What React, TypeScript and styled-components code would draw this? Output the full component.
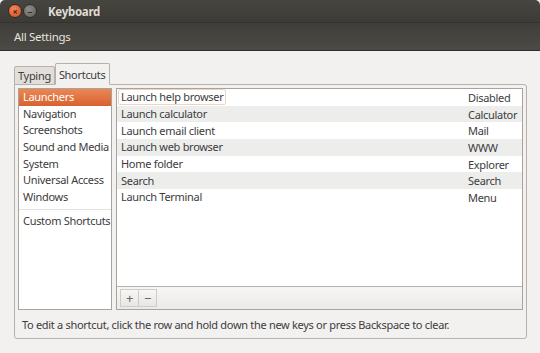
import styled, { createGlobalStyle } from 'styled-components';

const GlobalStyle = createGlobalStyle`
    html, body {
        margin: 0;
        padding: 0;
        background: #f2f1f0;
    }
    body {
        font-family: "Noto Sans", "DejaVu Sans", sans-serif;
        font-size: 11px;
        letter-spacing: -0.3px;
        color: #3c3c3c;
    }
`;

const Window = styled.div`
    width: 540px;
    height: 353px;
    overflow: hidden;
    display: flex;
    flex-direction: column;
    background: #f2f1f0;
`;

const TitleBar = styled.div`
    height: 22px;
    display: flex;
    align-items: center;
    padding-left: 8px;
    background: linear-gradient(#46453f, #3c3b37);
    border-bottom: 1px solid #33322e;
    border-radius: 5px 5px 0 0;
`;

const WinButton = styled.div<{ kind: 'close' | 'min' }>`
    width: 12px;
    height: 12px;
    border-radius: 50%;
    margin-right: 1px;
    background: ${p => p.kind === 'close'
        ? 'radial-gradient(circle at 40% 35%, #f58a5c, #d5471d)'
        : 'radial-gradient(circle at 40% 35%, #8f8d88, #5f5d58)'};
    border: 1px solid #2e2d2a;
    display: flex;
    align-items: center;
    justify-content: center;
    color: #3a2418;
    font-size: 9px;
    line-height: 1;
    font-weight: bold;
    letter-spacing: 0;
`;

const Title = styled.span`
    margin-left: 10px;
    color: #dfdbd2;
    font-weight: bold;
    font-size: 11.5px;
`;

const Toolbar = styled.div`
    height: 27px;
    display: flex;
    align-items: center;
    padding-left: 14px;
    background: linear-gradient(#3f3e3a, #4b4a45);
    border-bottom: 1px solid #2f2e2b;
`;

const ToolbarLabel = styled.span`
    color: #e6e3dd;
    font-size: 11.5px;
`;

const Body = styled.div`
    flex: 1;
    display: flex;
    flex-direction: column;
    padding: 14px 13px 0 14px;
`;

const TabRow = styled.div`
    display: flex;
    align-items: flex-end;
    height: 20px;
    margin-bottom: -1px;
    position: relative;
    z-index: 1;
`;

const Tab = styled.div<{ active?: boolean }>`
    height: ${p => (p.active ? 20 : 17)}px;
    padding: 0 3px;
    display: flex;
    align-items: center;
    font-size: 11px;
    color: #3c3c3c;
    border: 1px solid #b5b1ab;
    border-bottom: ${p => (p.active ? '1px solid #f2f1f0' : '1px solid #b5b1ab')};
    border-radius: 2px 2px 0 0;
    background: ${p => (p.active ? '#f2f1f0' : '#e2dfdb')};
`;

const Panel = styled.div`
    border: 1px solid #b5b1ab;
    border-radius: 0 3px 3px 3px;
    padding: 3px 3px 0 3px;
    display: flex;
    flex-direction: column;
    height: 255px;
    box-sizing: border-box;
`;

const Content = styled.div`
    display: flex;
    gap: 4px;
    height: 222px;
`;

const CategoryList = styled.div`
    width: 94px;
    background: #fff;
    border: 1px solid #a7a39d;
    box-sizing: border-box;
    display: flex;
    flex-direction: column;
`;

const Category = styled.div<{ selected?: boolean }>`
    height: 16.7px;
    line-height: 16.7px;
    padding-left: 4px;
    font-size: 11px;
    white-space: nowrap;
    color: ${p => (p.selected ? '#fff' : '#3c3c3c')};
    background: ${p => (p.selected ? 'linear-gradient(#ea8856, #d8612e)' : 'transparent')};
`;

const Separator = styled.div`
    height: 1px;
    margin: 3px 0 3px;
    background: #e4e2df;
`;

const RightPane = styled.div`
    flex: 1;
    display: flex;
    flex-direction: column;
    border: 1px solid #a7a39d;
    box-sizing: border-box;
`;

const ShortcutList = styled.div`
    flex: 1;
    background: #fff;
    border-bottom: 1px solid #b5b1ab;
`;

const ShortcutRow = styled.div<{ odd: boolean }>`
    height: 16.7px;
    display: flex;
    align-items: center;
    justify-content: space-between;
    padding: 0 4px 0 1px;
    font-size: 11px;
    background: ${p => (p.odd ? '#ededec' : '#fff')};
`;

const ActionName = styled.span<{ focused?: boolean }>`
    padding: 0 2px;
    border: 1px solid ${p => (p.focused ? '#ecd3c4' : 'transparent')};
    border-radius: 2px;
    line-height: 14px;
`;

const KeyName = styled.span`
    width: 50px;
`;

const ListToolbar = styled.div`
    height: 22px;
    display: flex;
    align-items: center;
    padding-left: 3px;
    background: linear-gradient(#f6f5f4, #ebeae8);
`;

const SmallButton = styled.div`
    width: 17px;
    height: 16px;
    display: flex;
    align-items: center;
    justify-content: center;
    border: 1px solid #cfccc7;
    background: linear-gradient(#f8f7f6, #e8e6e3);
    color: #6a6864;
    font-size: 13px;
    line-height: 1;
    & + & {
        border-left: none;
    }
`;

const Hint = styled.div`
    flex: 1;
    display: flex;
    align-items: center;
    padding-left: 4px;
    font-size: 11px;
    color: #3c3c3c;
`;

const categories = [
    'Launchers',
    'Navigation',
    'Screenshots',
    'Sound and Media',
    'System',
    'Universal Access',
    'Windows',
];

const shortcuts = [
    ['Launch help browser', 'Disabled'],
    ['Launch calculator', 'Calculator'],
    ['Launch email client', 'Mail'],
    ['Launch web browser', 'WWW'],
    ['Home folder', 'Explorer'],
    ['Search', 'Search'],
    ['Launch Terminal', 'Menu'],
];

const App = () => {
    return (
        <Window>
            <GlobalStyle />
            <TitleBar>
                <WinButton kind="close">×</WinButton>
                <WinButton kind="min">–</WinButton>
                <Title>Keyboard</Title>
            </TitleBar>
            <Toolbar>
                <ToolbarLabel>All Settings</ToolbarLabel>
            </Toolbar>
            <Body>
                <TabRow>
                    <Tab>Typing</Tab>
                    <Tab active>Shortcuts</Tab>
                </TabRow>
                <Panel>
                    <Content>
                        <CategoryList>
                            {categories.map((c, i) => (
                                <Category key={c} selected={i === 0}>{c}</Category>
                            ))}
                            <Separator />
                            <Category>Custom Shortcuts</Category>
                        </CategoryList>
                        <RightPane>
                            <ShortcutList>
                                {shortcuts.map(([name, key], i) => (
                                    <ShortcutRow key={name} odd={i % 2 === 1}>
                                        <ActionName focused={i === 0}>{name}</ActionName>
                                        <KeyName>{key}</KeyName>
                                    </ShortcutRow>
                                ))}
                            </ShortcutList>
                            <ListToolbar>
                                <SmallButton>+</SmallButton>
                                <SmallButton>−</SmallButton>
                            </ListToolbar>
                        </RightPane>
                    </Content>
                    <Hint>To edit a shortcut, click the row and hold down the new keys or press Backspace to clear.</Hint>
                </Panel>
            </Body>
        </Window>
    );
}

export default App;
